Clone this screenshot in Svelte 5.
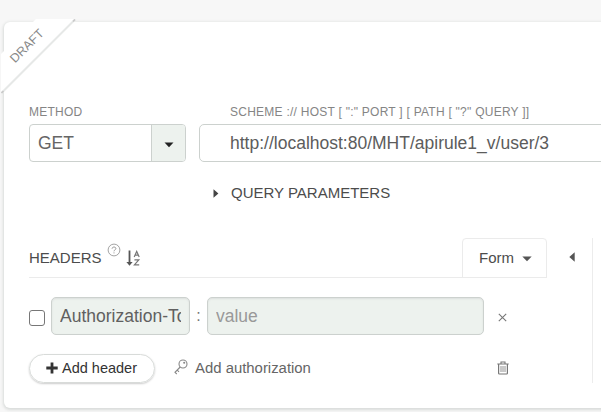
<script>
  let method = $state('GET');
  let url = $state('http://localhost:80/MHT/apirule1_v/user/3');
  let headerName = $state('Authorization-Token');
  let headerValue = $state('');
  let enabled = $state(false);
</script>

<main class="page">
  <section class="card">
    <div class="draft">
      <svg width="78" height="78" viewBox="0 0 78 78">
        <path d="M35 0H74L0 74V35z" fill="#fff" />
        <path d="M74 .5L.5 74" stroke="#e6e8e7" stroke-width="2" />
        <path d="M74 .5L72 2.5M.5 74L2.5 72" stroke="#c8c8c8" stroke-width="1.6" />
      </svg>
      <span class="draft-text">DRAFT</span>
    </div>

    <div class="request">
      <div class="method">
        <div class="label">METHOD</div>
        <div class="select">
          <span class="select-value">{method}</span>
          <button class="select-toggle" aria-label="Choose method">
            <svg width="10" height="6" viewBox="0 0 10 6"><path d="M.5.5h9L5 5.3z" fill="#222" /></svg>
          </button>
        </div>
      </div>
      <div class="target">
        <div class="label scheme">SCHEME :// HOST [ ":" PORT ] [ PATH [ "?" QUERY ]]</div>
        <input class="url" aria-label="URL" bind:value={url} />
      </div>
    </div>

    <div class="query">
      <svg width="6" height="9" viewBox="0 0 6 9"><path d="M.5.3L5.4 4.5L.5 8.7z" fill="#444" /></svg>
      <span>QUERY PARAMETERS</span>
    </div>

    <div class="lower">
      <div class="headers">
        <div class="headers-bar">
          <span class="title">HEADERS</span>
          <svg class="help" width="14" height="14" viewBox="0 0 14 14" fill="none" stroke="#999">
            <circle cx="7" cy="7" r="5.9" stroke-width=".9" />
            <path d="M5.1 5.7C5.1 3.5 8.9 3.5 8.9 5.6C8.9 6.8 7 6.8 7 8.3M7 9.4V10.4" stroke-width="1" />
          </svg>
          <svg class="sort" width="15" height="17" viewBox="0 0 15 17" fill="none" stroke="#777">
            <path d="M3.5 .5V13" stroke="#555" stroke-width="1.8" />
            <path d="M.4 12H6.6L3.5 15.8z" fill="#555" stroke="none" />
            <path d="M8.2 7L10.7 1.4L13.2 7M9.1 5.2H12.3" stroke-width="1.2" />
            <path d="M8.4 9.8H12.8L8.4 14.8H13.2" stroke-width="1.2" />
          </svg>
          <button class="tab">
            <span>Form</span>
            <svg width="10" height="6" viewBox="0 0 10 6"><path d="M.3.5h9.4L5 5.3z" fill="#555" /></svg>
          </button>
        </div>

        <div class="entry">
          <input class="check" type="checkbox" aria-label="Enable header" bind:checked={enabled} />
          <input class="field name" aria-label="Header name" bind:value={headerName} />
          <span class="colon">:</span>
          <input class="field value" placeholder="value" aria-label="Header value" bind:value={headerValue} />
          <button class="remove" aria-label="Remove header">
            <svg width="9" height="9" viewBox="0 0 9 9"><path d="M.8.8L8.2 8.2M8.2.8L.8 8.2" stroke="#777" stroke-width="1.1" /></svg>
          </button>
        </div>

        <div class="actions">
          <button class="add">
            <svg width="12" height="12" viewBox="0 0 12 12"><path d="M6 .4V11.6M.3 6H11.7" stroke="#333" stroke-width="2.8" /></svg>
            <span>Add header</span>
          </button>
          <button class="auth">
            <svg width="14" height="16" viewBox="0 0 14 16" fill="none" stroke="#888" stroke-width="1.1">
              <circle cx="9" cy="5" r="4" />
              <path d="M6.2 8L1 13.3L2.8 15M3.2 11.2L5 12.9" />
              <circle cx="10.2" cy="3.8" r=".5" />
            </svg>
            <span>Add authorization</span>
          </button>
          <button class="trash" aria-label="Delete all headers">
            <svg width="12" height="14" viewBox="0 0 12 14" fill="none" stroke="#777">
              <path d="M.3 3H11.7M4 2.8V1H8V2.8" stroke-width="1.1" />
              <path d="M1.6 3V12.2Q1.6 13 2.4 13H9.6Q10.4 13 10.4 12.2V3" stroke-width="1.2" />
              <path d="M4 5V11M6 5V11M8 5V11" stroke-width=".8" />
            </svg>
          </button>
        </div>
      </div>
      <div class="collapse">
        <svg width="6" height="10" viewBox="0 0 6 10"><path d="M5.7.2V9.8L.3 5z" fill="#555" /></svg>
      </div>
    </div>
  </section>
</main>

<style>
  :global(body) {
    overflow: hidden;
    background: #f7f7f7;
  }
  .page {
    box-sizing: border-box;
    height: 412px;
    padding: 22px 0 0 4px;
    overflow: hidden;
    font-family: 'Liberation Sans', Arial, sans-serif;
    color: #4c4c4c;
  }
  .page * {
    box-sizing: border-box;
  }
  button,
  input {
    margin: 0;
    padding: 0;
    border: 0;
    background: none;
    font: inherit;
    color: inherit;
    outline: none;
  }
  svg {
    display: block;
    flex: none;
  }
  .card {
    position: relative;
    width: 620px;
    height: 386px;
    padding: 83px 0 0 25px;
    background: #fff;
    border-radius: 6px;
    box-shadow: 0 1px 3px 1px #d9dcda;
  }
  .draft {
    position: absolute;
    left: -3px;
    top: -3px;
    width: 78px;
    height: 78px;
  }
  .draft-text {
    position: absolute;
    left: 1px;
    top: 18px;
    width: 50px;
    line-height: 18px;
    text-align: center;
    font-size: 12.5px;
    color: #888;
    transform: rotate(-45deg);
  }
  .request {
    display: flex;
    gap: 13px;
  }
  .label {
    height: 19px;
    line-height: 14px;
    font-size: 12px;
    letter-spacing: 0.25px;
    color: #858585;
    white-space: nowrap;
  }
  .scheme {
    padding-left: 31px;
  }
  .method {
    width: 157px;
  }
  .select {
    display: flex;
    height: 38px;
    border: 1px solid #ccd1ce;
    border-radius: 4px;
    overflow: hidden;
  }
  .select-value {
    flex: 1;
    padding-left: 8px;
    line-height: 37px;
    font-size: 17.5px;
    color: #666;
  }
  .select-toggle {
    display: flex;
    align-items: center;
    justify-content: center;
    width: 34px;
    padding-top: 3px;
    border-left: 1px solid #ccd1ce;
    background: #edf2ee;
  }
  .target {
    flex: 1;
  }
  .url {
    width: 100%;
    height: 38px;
    padding-left: 30px;
    border: 1px solid #ccd1ce;
    border-radius: 5px;
    font-size: 17.5px;
    color: #5c5c5c;
  }
  .query {
    display: flex;
    align-items: center;
    gap: 12px;
    height: 18px;
    margin: 22px 0 0 184px;
    font-size: 15px;
  }
  .query span {
    padding-bottom: 2px;
  }
  .lower {
    display: flex;
    margin-top: 36px;
    height: 145px;
  }
  .headers {
    width: 518px;
  }
  .headers-bar {
    display: flex;
    width: 518px;
    height: 40px;
    border-bottom: 1px solid #ebebeb;
  }
  .title {
    line-height: 40px;
    width: 78px;
    font-size: 15px;
  }
  .help {
    margin-top: 5px;
  }
  .sort {
    margin: 12px 0 0 5px;
  }
  .tab {
    display: flex;
    align-items: center;
    gap: 8px;
    width: 85px;
    height: 40px;
    margin-left: auto;
    padding-left: 16px;
    border: 1px solid #ebebeb;
    border-radius: 4px 4px 0 0;
    font-size: 15px;
  }
  .tab span {
    padding-bottom: 2px;
  }
  .tab svg {
    margin-top: 2px;
  }
  .entry {
    display: flex;
    align-items: center;
    height: 38px;
    margin-top: 19px;
  }
  .check {
    appearance: none;
    width: 16px;
    height: 16px;
    margin: 3px 6px 0 0;
    border: 1px solid #777;
    border-radius: 3px;
  }
  .field {
    height: 38px;
    padding: 0 8px;
    border: 1px solid #ccd1ce;
    border-radius: 5px;
    background: #edf2ee;
    box-shadow: inset 0 1px 2px #dcdfdd;
    font-size: 17.5px;
    color: #606060;
  }
  .field::placeholder {
    color: #999;
    opacity: 1;
  }
  .name {
    width: 139px;
  }
  .colon {
    width: 17px;
    text-align: center;
    font-size: 16px;
    color: #777;
  }
  .value {
    width: 277px;
  }
  .remove {
    margin: 2px 0 0 14px;
  }
  .actions {
    display: flex;
    align-items: center;
    height: 30px;
    margin-top: 18px;
  }
  .add {
    display: flex;
    align-items: center;
    gap: 4px;
    width: 126px;
    height: 29px;
    padding-left: 16px;
    border: 1px solid #d8dbd9;
    border-radius: 15px;
    box-shadow: 0 1px 2px #ccc;
    font-size: 14.5px;
    color: #333;
    white-space: nowrap;
  }
  .auth {
    display: flex;
    align-items: center;
    gap: 7px;
    margin: -2px 0 0 19px;
    font-size: 14.9px;
    color: #666;
    white-space: nowrap;
  }
  .auth span {
    padding-top: 2px;
  }
  .trash {
    margin: 0 38px 0 auto;
  }
  .collapse {
    width: 46px;
    padding: 14px 0 0 22px;
    border-right: 1px solid #ececec;
  }
</style>
